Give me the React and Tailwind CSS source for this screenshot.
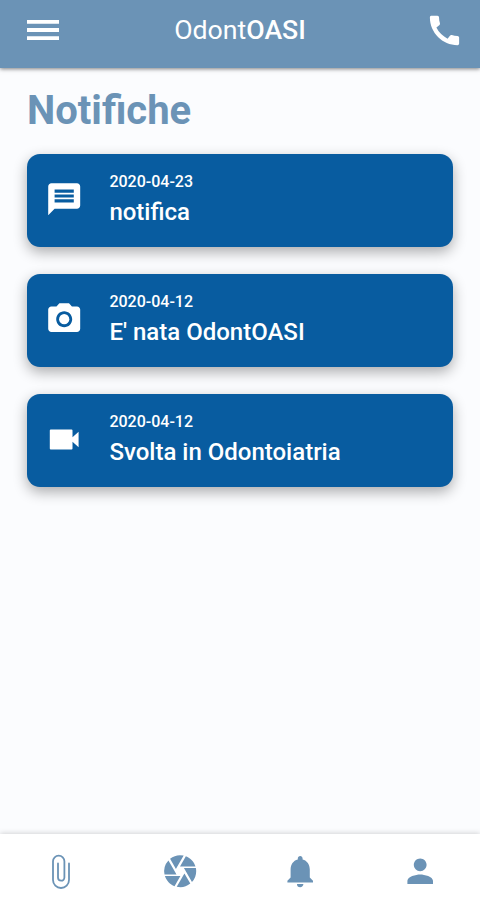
import { MdCall, MdCamera, MdMessage, MdNotifications, MdPerson, MdPhotoCamera } from 'react-icons/md';

const NOTIFICATIONS = [
  { date: '2020-04-23', title: 'notifica', icon: MdMessage },
  { date: '2020-04-12', title: "E' nata OdontOASI", icon: MdPhotoCamera },
  { date: '2020-04-12', title: 'Svolta in Odontoiatria', icon: IconVideo },
];

const TABS = [
  { label: 'Allegati', icon: IconClip },
  { label: 'Galleria', icon: MdCamera },
  { label: 'Notifiche', icon: MdNotifications },
  { label: 'Profilo', icon: MdPerson },
];

function IconClip() {
  return (
    <svg width="22" height="36" viewBox="-2 0 22 36" fill="none" stroke="currentColor" strokeWidth="1.8" strokeLinecap="round">
      <path d="M18 9.5V26a8 8 0 0 1-16 0V7.3a5.7 5.7 0 0 1 11.4 0V23.5a3.2 3.2 0 0 1-6.4 0V9.5" />
    </svg>
  );
}

function IconMenu() {
  return (
    <svg width="32" height="20" viewBox="0 0 32 20" fill="currentColor">
      <path d="M0 0h32v3.8H0zM0 8.1h32v3.8H0zM0 16.2h32V20H0z" />
    </svg>
  );
}

function IconVideo({ size, className }) {
  return (
    <svg width={size} height={size} viewBox="0 0 24 24" fill="currentColor" className={className}>
      <path d="M3.6 6h13a.6.6 0 0 1 .6.6v4.2L21 7.3v9.8l-3.8-3.5v4.2a.6.6 0 0 1-.6.6h-13a.6.6 0 0 1-.6-.6V6.6a.6.6 0 0 1 .6-.6z" />
    </svg>
  );
}

function NotificationCard({ date, title, icon: Icon }) {
  return (
    <li className="flex h-[93px] items-center rounded-[13px] bg-[#085ca0] pl-[18px] text-white shadow-[0_5px_14px_rgba(0,0,0,0.32)]">
      <Icon size={38.4} className="mb-0.5 shrink-0" />
      <div className="ml-[26px] pb-[3px]">
        <p className="text-[16px] leading-[22px] font-medium">{date}</p>
        <h2 className="mt-1 text-[24px] leading-[30px] font-medium">{title}</h2>
      </div>
    </li>
  );
}

export default function App() {
  return (
    <div className="flex h-[900px] w-[480px] flex-col overflow-hidden bg-[#fbfcfe] font-['Roboto',sans-serif]">
      <header className="z-10 grid h-[68px] shrink-0 grid-cols-[1fr_auto_1fr] items-center bg-[#6b93b6] pr-4 pb-2 pl-[27px] text-white shadow-[0_1px_4px_rgba(0,0,0,0.5)]">
        <button aria-label="Menu" className="justify-self-start"><IconMenu /></button>
        <span className="mr-[11px] text-[26.7px]">Odont<b className="font-medium">OASI</b></span>
        <button aria-label="Chiama" className="justify-self-end"><MdCall size={39} /></button>
      </header>

      <main className="flex-1 px-[27px] pt-[19px]">
        <h1 className="text-[40px] leading-[47px] font-bold text-[#6b93b6]">Notifiche</h1>
        <ul className="mt-5 space-y-[27px]">
          {NOTIFICATIONS.map((n) => <NotificationCard key={n.title} {...n} />)}
        </ul>
      </main>

      <nav className="grid h-[66px] shrink-0 grid-cols-4 bg-white pt-[9px] text-[#6b93b6] shadow-[0_-1px_5px_rgba(0,0,0,0.16)]">
        {TABS.map(({ label, icon: Icon }) => (
          <button key={label} aria-label={label} className="grid place-items-center"><Icon size={38.4} /></button>
        ))}
      </nav>
    </div>
  );
}
